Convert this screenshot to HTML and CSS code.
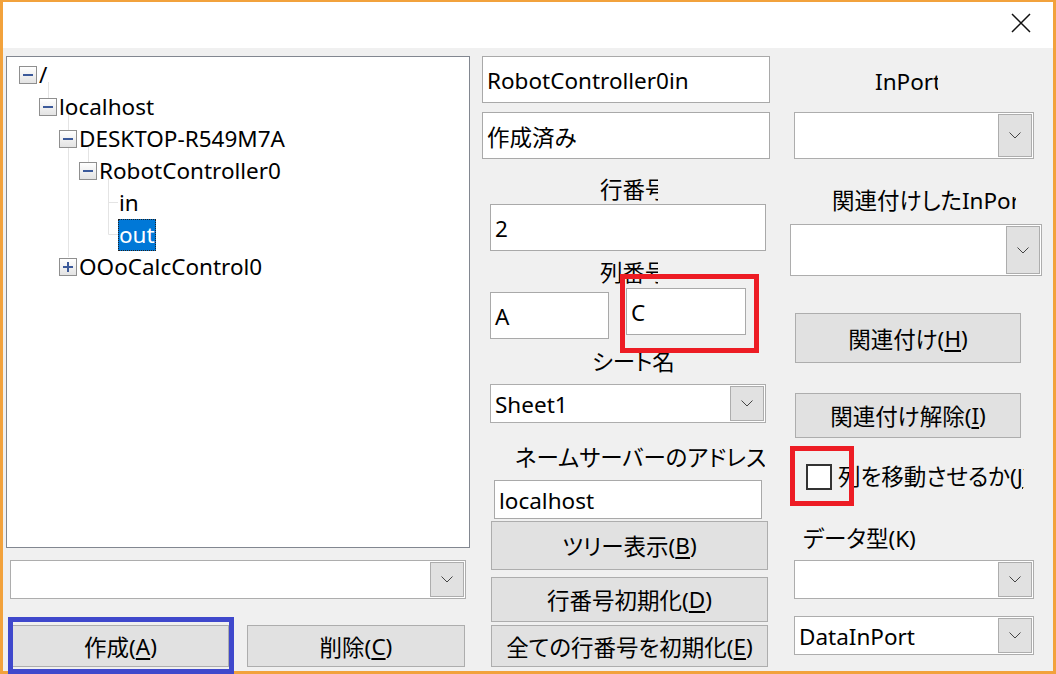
FILE: index.html
```html
<!DOCTYPE html>
<html lang="ja">
<head>
<meta charset="utf-8">
<title>Dialog</title>
<link rel="stylesheet" href="styles.css">
</head>
<body>
<div class="window">
  <div class="titlebar">
    <svg class="close" width="20" height="20" viewBox="0 0 20 20"><path d="M1 1 L19 19 M19 1 L1 19" stroke="#111" stroke-width="1.5" fill="none"/></svg>
  </div>
  <div class="client">
    <div class="col left">
      <div class="tree">
        <svg class="lines" width="462" height="490" viewBox="0 0 462 490">
          <g stroke="#e4e4e4" stroke-width="1" fill="none">
            <path d="M41.5 25 V41"/>
            <path d="M61.5 57 V200"/>
            <path d="M81.5 89 V105"/>
            <path d="M101.5 121 V177.5 H111 M101.5 145.5 H111"/>
          </g>
        </svg>
        <div class="row lv0"><span class="exp minus"></span><span class="txt">/</span></div>
        <div class="row lv1"><span class="exp minus"></span><span class="txt">localhost</span></div>
        <div class="row lv2"><span class="exp minus"></span><span class="txt">DESKTOP-R549M7A</span></div>
        <div class="row lv3"><span class="exp minus"></span><span class="txt">RobotController0</span></div>
        <div class="row lv4"><span class="leaf"></span><span class="txt">in</span></div>
        <div class="row lv4"><span class="leaf"></span><span class="txt sel">out</span></div>
        <div class="row lv2"><span class="exp plus"></span><span class="txt">OOoCalcControl0</span></div>
      </div>
      <div class="combo c-left"><span class="val"></span><span class="drop"><svg width="12" height="7" viewBox="0 0 12 7"><path d="M0.5 0.5 L6 6 L11.5 0.5" stroke="#444" fill="none"/></svg></span></div>
      <div class="btnrow">
        <div class="btn b-create">作成(<u>A</u>)</div>
        <div class="btn b-delete">削除(<u>C</u>)</div>
      </div>
    </div>

    <div class="col mid">
      <div class="tb tb-name">RobotController0in</div>
      <div class="tb tb-state">作成済み</div>
      <div class="lbl l-row">行番号</div>
      <div class="tb tb-rownum">2</div>
      <div class="lbl l-col">列番号</div>
      <div class="colrow">
        <div class="tb tb-a">A</div>
        <div class="tb tb-c">C</div>
      </div>
      <div class="lbl l-sheet">シート名</div>
      <div class="combo c-sheet"><span class="val">Sheet1</span><span class="drop"><svg width="12" height="7" viewBox="0 0 12 7"><path d="M0.5 0.5 L6 6 L11.5 0.5" stroke="#444" fill="none"/></svg></span></div>
      <div class="lbl l-ns">ネームサーバーのアドレス</div>
      <div class="tb tb-host">localhost</div>
      <div class="btn b-tree">ツリー表示(<u>B</u>)</div>
      <div class="btn b-init">行番号初期化(<u>D</u>)</div>
      <div class="btn b-initall">全ての行番号を初期化(<u>E</u>)</div>
    </div>

    <div class="col right">
      <div class="lbl l-inport">InPort</div>
      <div class="combo c-inport"><span class="val"></span><span class="drop"><svg width="12" height="7" viewBox="0 0 12 7"><path d="M0.5 0.5 L6 6 L11.5 0.5" stroke="#444" fill="none"/></svg></span></div>
      <div class="lbl l-linked">関連付けしたInPort</div>
      <div class="combo c-linked"><span class="val"></span><span class="drop"><svg width="12" height="7" viewBox="0 0 12 7"><path d="M0.5 0.5 L6 6 L11.5 0.5" stroke="#444" fill="none"/></svg></span></div>
      <div class="btn b-link">関連付け(<u>H</u>)</div>
      <div class="btn b-unlink">関連付け解除(<u>I</u>)</div>
      <div class="chkrow"><span class="chk"></span><span class="chklbl">列を移動させるか(<u>J</u>)</span></div>
      <div class="lbl l-type">データ型(K)</div>
      <div class="combo c-type"><span class="val"></span><span class="drop"><svg width="12" height="7" viewBox="0 0 12 7"><path d="M0.5 0.5 L6 6 L11.5 0.5" stroke="#444" fill="none"/></svg></span></div>
      <div class="combo c-port"><span class="val">DataInPort</span><span class="drop"><svg width="12" height="7" viewBox="0 0 12 7"><path d="M0.5 0.5 L6 6 L11.5 0.5" stroke="#444" fill="none"/></svg></span></div>
    </div>
  </div>
  <div class="mark mark-blue"></div>
  <div class="mark mark-red1"></div>
  <div class="mark mark-red2"></div>
</div>
</body>
</html>
```
FILE: styles.css
```css
* { box-sizing: border-box; }
html, body { margin: 0; padding: 0; }
body {
  width: 1056px;
  height: 674px;
  overflow: hidden;
  font-family: "Noto Sans", "Noto Sans CJK JP", sans-serif;
  font-size: 22.5px;
  font-feature-settings: "palt";
  color: #000;
  background: #fff;
}
.window {
  position: relative;
  width: 1056px;
  height: 674px;
  border: 3px solid #f2a23c;
  border-top-width: 2px;
  background: #f0f0f0;
  display: flex;
  flex-direction: column;
}
.titlebar {
  height: 46px;
  background: #fff;
  display: flex;
  justify-content: flex-end;
  align-items: flex-start;
  padding: 11px 22px 0 0;
  flex: none;
}
.close { display: block; }
.client {
  flex: 1;
  display: flex;
  align-items: flex-start;
}
.col { display: flex; flex-direction: column; align-items: flex-start; flex: none; }
.left { width: 464px; margin-left: 3px; }
.mid { width: 288px; margin-left: 12px; }
.right { width: 252px; margin-left: 20px; }

/* tree */
.tree {
  position: relative;
  margin-top: 8px;
  width: 464px;
  height: 492px;
  background: #fff;
  border: 1px solid #828790;
  padding-top: 2px;
}
.lines { position: absolute; left: 0; top: 0; }
.row {
  position: relative;
  height: 32px;
  display: flex;
  align-items: center;
  line-height: 32px;
}
.lv0 { padding-left: 12px; }
.lv1 { padding-left: 32px; }
.lv2 { padding-left: 52px; }
.lv3 { padding-left: 72px; }
.lv4 { padding-left: 92px; }
.exp {
  width: 18px;
  height: 18px;
  border: 1px solid #8f8f8f;
  background: linear-gradient(#ffffff, #e3e3e3);
  position: relative;
  flex: none;
  margin-right: 1px;
}
.exp::before {
  content: "";
  position: absolute;
  left: 3px;
  top: 7px;
  width: 10px;
  height: 2px;
  background: #3c5a9a;
}
.plus::after {
  content: "";
  position: absolute;
  left: 7px;
  top: 3px;
  width: 2px;
  height: 10px;
  background: #3c5a9a;
}
.leaf { width: 19px; flex: none; }
.txt { padding: 0 1px; white-space: nowrap; }
.sel {
  background: #0078d7;
  color: #fff;
  outline: 1px dotted #222;
  outline-offset: -1px;
  height: 32px;
  padding: 0 1px;
  line-height: 31px;
}

/* textbox */
.tb {
  background: #fff;
  border: 1px solid #a9a9a9;
  padding-left: 4px;
  padding-top: 2px;
  display: flex;
  align-items: center;
  white-space: nowrap;
  flex: none;
}
.tb-name { margin-top: 8px; width: 288px; height: 47px; }
.tb-state { margin-top: 9px; width: 288px; height: 47px; }
.tb-rownum { margin-top: 0; margin-left: 8px; width: 276px; height: 47px; }
.colrow { display: flex; align-items: flex-start; }
.tb-a { margin-top: 4px; margin-left: 8px; width: 119px; height: 47px; }
.tb-c { margin-top: 0; margin-left: 17px; width: 120px; height: 47px; }
.tb-host { margin-top: 6px; margin-left: 12px; width: 268px; height: 39px; }

/* labels */
.lbl {
  height: 32px;
  line-height: 32px;
  white-space: nowrap;
  overflow-x: clip;
  overflow-y: visible;
  flex: none;
}
.l-row { margin-top: 16px; margin-left: 118px; width: 58px; height: 29px; line-height: 29px; }
.l-col { margin-top: 7px; margin-left: 118px; width: 58px; height: 30px; line-height: 30px; }
.l-sheet { margin-top: 7px; margin-left: 110px; width: 90px; }
.l-ns { margin-top: 19px; margin-left: 33px; width: 250px; }
.l-inport { margin-top: 18px; margin-left: 85px; width: 63px; }
.l-linked { margin-top: 26px; margin-left: 42px; width: 184px; }
.l-type { margin-top: 30px; margin-left: 13px; width: 140px; }

/* combo */
.combo {
  background: #fff;
  border: 1px solid #adadad;
  display: flex;
  align-items: stretch;
  padding: 1px;
  flex: none;
}
.combo .val {
  flex: 1;
  display: flex;
  align-items: center;
  padding-left: 3px;
  padding-top: 1px;
  white-space: nowrap;
}
.drop {
  width: 34px;
  background: #e1e1e1;
  border: 1px solid #adadad;
  display: flex;
  align-items: center;
  justify-content: center;
}
.drop svg { display: block; }
.c-left { margin-top: 12px; margin-left: 4px; width: 456px; height: 39px; }
.c-sheet { margin-top: 6px; margin-left: 8px; width: 276px; height: 39px; }
.c-inport { margin-top: 14px; margin-left: 4px; width: 240px; height: 47px; }
.c-linked { margin-top: 7px; width: 252px; height: 52px; }
.c-type { margin-top: 5px; margin-left: 4px; width: 240px; height: 39px; }
.c-port { margin-top: 17px; margin-left: 4px; width: 240px; height: 39px; }

/* buttons */
.btn {
  background: #e1e1e1;
  border: 1px solid #adadad;
  display: flex;
  align-items: center;
  justify-content: center;
  white-space: nowrap;
  flex: none;
}
.btn u { text-decoration-thickness: 2px; text-underline-offset: 3px; }
.btnrow { display: flex; margin-top: 26px; }
.b-create { margin-left: 6px; width: 217px; height: 42px; }
.b-delete { margin-left: 18px; width: 218px; height: 42px; }
.b-tree { margin-top: 2px; margin-left: 9px; width: 277px; height: 49px; }
.b-init { margin-top: 7px; margin-left: 9px; width: 277px; height: 45px; }
.b-initall { margin-top: 3px; margin-left: 9px; width: 277px; height: 42px; }
.b-link { margin-top: 37px; margin-left: 5px; width: 226px; height: 50px; }
.b-unlink { margin-top: 30px; margin-left: 5px; width: 226px; height: 45px; }

/* checkbox */
.chkrow { display: flex; align-items: center; margin-top: 23px; height: 32px; }
.chk {
  width: 26px;
  height: 26px;
  border: 2px solid #333;
  background: #fff;
  margin-left: 16px;
  flex: none;
}
.chklbl {
  margin-left: 6px;
  width: 186px;
  height: 32px;
  overflow-x: clip;
  overflow-y: visible;
  white-space: nowrap;
  line-height: 32px;
}

/* annotation marks */
.mark { position: absolute; border: 5px solid; }
.mark-blue { border-color: #3f48cc; left: 5px; top: 615px; width: 226px; height: 57px; }
.mark-red1 { border-color: #ed1c24; left: 617px; top: 272px; width: 139px; height: 79px; }
.mark-red2 { border-color: #ed1c24; left: 787px; top: 444px; width: 64px; height: 60px; }
```
